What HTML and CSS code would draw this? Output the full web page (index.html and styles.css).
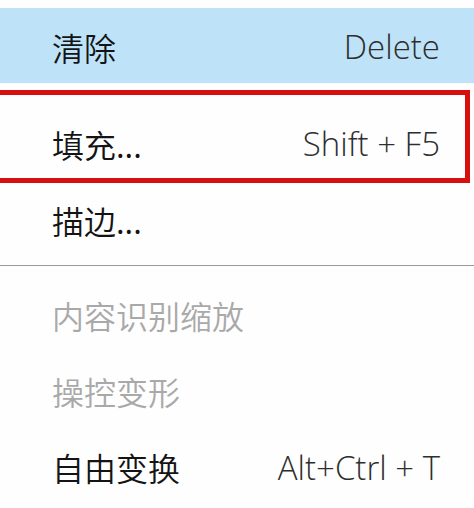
FILE: index.html
```html
<!DOCTYPE html>
<html lang="zh-CN">
<head>
<meta charset="utf-8">
<title>菜单</title>
<link rel="stylesheet" href="styles.css">
</head>
<body>
<div class="menu">
  <div class="item hl"><span class="label">清除</span><span class="key">Delete</span></div>
  <div class="item boxed"><span class="label">填充...</span><span class="key">Shift + F5</span></div>
  <div class="item short"><span class="label">描边...</span></div>
  <div class="sep"></div>
  <div class="item row disabled"><span class="label">内容识别缩放</span></div>
  <div class="item row disabled"><span class="label">操控变形</span></div>
  <div class="item row"><span class="label">自由变换</span><span class="key">Alt+Ctrl + T</span></div>
</div>
</body>
</html>
```
FILE: styles.css
```css
html, body {
  margin: 0;
  padding: 0;
  background: #fefefe;
}
.menu {
  padding-top: 8px;
  width: 474px;
}
.item {
  display: flex;
  align-items: center;
  justify-content: space-between;
  box-sizing: border-box;
  padding: 0 34px 0 52px;
}
.label {
  font-family: "Noto Sans CJK SC", sans-serif;
  font-weight: 350;
  font-size: 32px;
  line-height: 1;
  color: #141414;
}
.key {
  font-family: "Open Sans", sans-serif;
  font-weight: 300;
  font-size: 33px;
  line-height: 1;
  color: #2e2e2e;
}
.hl {
  height: 75px;
  background: #bee3f9;
  padding-top: 2px;
}
.boxed {
  margin-top: 7px;
  margin-right: 4px;
  height: 93px;
  border: 5px solid #d70f0f;
  border-left: none;
  padding: 14px 25px 0 52px;
}
.short {
  height: 74px;
}
.sep {
  margin-top: 8px;
  height: 1px;
  background: #9a9a9a;
  margin-bottom: 11px;
}
.row {
  height: 76px;
}
.disabled .label {
  color: #a9a9a9;
}
```
